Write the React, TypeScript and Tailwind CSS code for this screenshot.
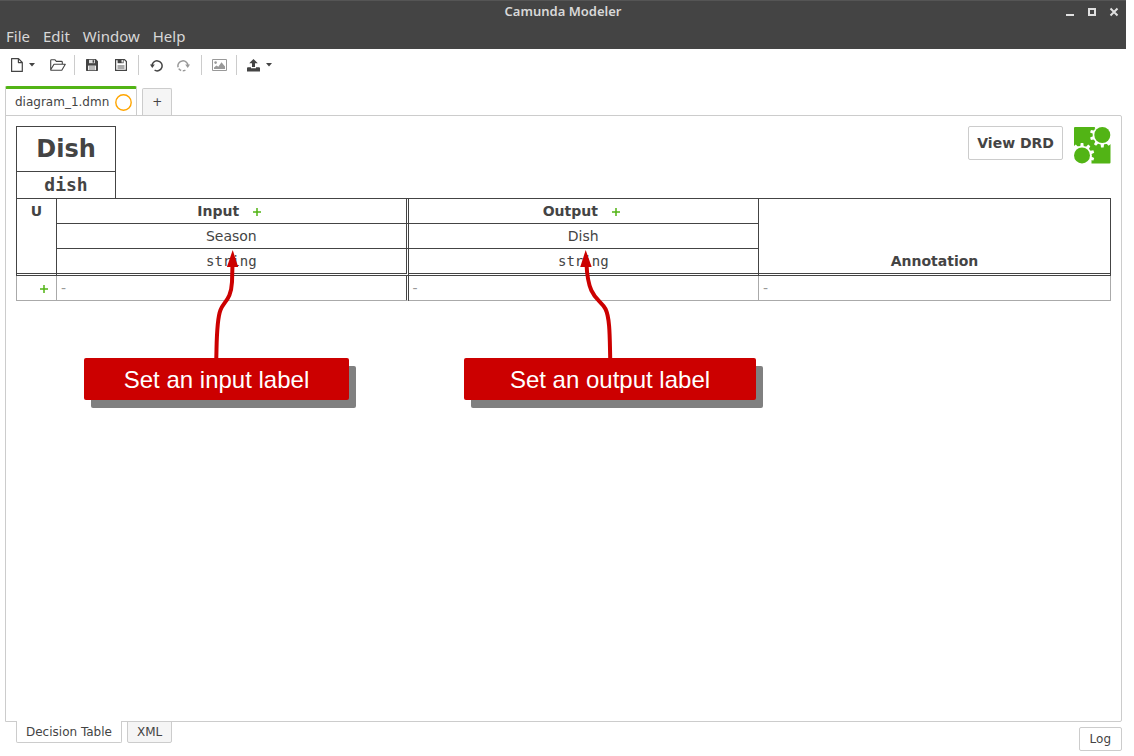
import type { ReactNode } from 'react';

const GREEN = '#52b415';

function ToolButton({ label, className = '', children }: { label: string; className?: string; children: ReactNode }) {
  return (
    <button type="button" aria-label={label} className={`flex h-5 items-center justify-center ${className}`}>
      {children}
    </button>
  );
}

function Separator() {
  return <span className="h-5 w-px bg-[#cccccc]" />;
}

function Caret() {
  return (
    <svg width="6" height="4" viewBox="0 0 6 4" fill="#444" aria-hidden="true">
      <path d="M0 0h6L3 3.4z" />
    </svg>
  );
}

function Disk({ dark }: { dark: boolean }) {
  return (
    <svg width="12" height="12" viewBox="0 0 12 12" aria-hidden="true">
      {dark ? (
        <>
          <path d="M0.7 0H9.8L12 2.2V11.3a.7.7 0 0 1-.7.7H.7a.7.7 0 0 1-.7-.7V.7A.7.7 0 0 1 .7 0z" fill="#444" />
          <path d="M3 .8h6v3.4H3z" fill="#ddd" />
          <path d="M6.6 1.2h1.5v2.5H6.6z" fill="#444" />
          <path d="M2 6.6h8v4.6H2z" fill="#eee" />
          <path d="M3 8h6M3 10h6" stroke="#777" strokeWidth=".9" />
        </>
      ) : (
        <>
          <path d="M.6.6H9.5L11.4 2.5V11.4H.6z" fill="#fff" stroke="#444" strokeWidth="1.2" />
          <path d="M2.6.6h6v3.6h-6z" fill="#444" />
          <path d="M6.6 1.1h1.2v2.3H6.6z" fill="#fff" />
          <path d="M2.5 7h7M2.5 9h7" stroke="#555" strokeWidth="1" />
        </>
      )}
    </svg>
  );
}

function TurnArrow({ color, flip }: { color: string; flip: boolean }) {
  return (
    <svg width="13" height="13" viewBox="0 0 13 13" aria-hidden="true">
      <g transform={flip ? 'matrix(-1 0 0 1 13 0)' : undefined}>
        <path
          d="M2.1 7.3A5 5 0 1 1 4.6 11.2"
          fill="none"
          stroke={color}
          strokeWidth="1.5"
          strokeDasharray={flip ? '17 1.5 3 1.5' : undefined}
        />
        <path d="M0 5.6h4.8L2.3 9z" fill={color} />
      </g>
    </svg>
  );
}

function Logo() {
  const teeth = [18, 54, 90, 126, 162, 198, 234, 270, 306, 342];
  const gears = [
    { x: 28.3, y: 8 },
    { x: 8, y: 28.4 },
  ];
  return (
    <svg width="37" height="38" viewBox="0 -1 37 38" aria-label="Camunda" role="img">
      <rect width="36.5" height="36.5" rx="1" fill={GREEN} />
      <path d="M21.500-1H37V17H28zM-1 19.500H8L17.500 28V37H-1z" fill="#fff" />
      {gears.map((g) => (
        <g key={g.x} transform={`translate(${g.x} ${g.y})`}>
          <circle r="9.7" fill="#fff" />
          {teeth.map((t) => (
            <path key={t} d="M8-1.900L12.400-1.300V1.300L8 1.900z" fill="#fff" transform={`rotate(${t})`} />
          ))}
          <circle r="8" fill={GREEN} />
        </g>
      ))}
    </svg>
  );
}

function AddButton({ label, className = '' }: { label: string; className?: string }) {
  return (
    <button type="button" aria-label={label} className={`align-middle ${className}`}>
      <svg width="8" height="8" viewBox="0 0 8 8" aria-hidden="true">
        <path d="M4 0V8M0 4H8" stroke={GREEN} strokeWidth="1.5" />
      </svg>
    </button>
  );
}

function Callout({ text, className, children }: { text: string; className: string; children: ReactNode }) {
  return (
    <div
      className={`absolute top-[242px] flex h-[42px] items-center justify-center rounded-xs bg-[#cc0000] pt-px font-['Liberation_Sans',sans-serif] text-2xl text-white shadow-[7px_8px_0_0_#808080] ${className}`}
    >
      {text}
      {children}
    </div>
  );
}

const line = 'border-[#444444]';

export default function App() {
  return (
    <div className="flex min-h-screen flex-col bg-white pr-2 font-['DejaVu_Sans',sans-serif] text-xs text-[#444444]">
      <header className="border-t border-[#555555] bg-[#444444] font-['Noto_Sans',sans-serif] text-[#d8d8d8]">
        <div className="grid h-[22px] grid-cols-[1fr_auto_1fr] items-center">
          <h1 className="col-start-2 text-[13px] font-semibold">Camunda Modeler</h1>
          <div className="flex items-center justify-end gap-3 pr-[7px]">
            <button type="button" aria-label="Minimize">
              <svg width="10" height="10" viewBox="0 0 10 10" fill="#e0e0e0"><path d="M1 7h8v2H1z" /></svg>
            </button>
            <button type="button" aria-label="Maximize">
              <svg width="10" height="10" viewBox="0 0 10 10" fill="none" stroke="#e0e0e0" strokeWidth="2"><path d="M2 2h6v6H2z" /></svg>
            </button>
            <button type="button" aria-label="Close">
              <svg width="10" height="10" viewBox="0 0 10 10" fill="none" stroke="#e0e0e0" strokeWidth="2"><path d="M1.5 1.5l7 7M8.5 1.5l-7 7" /></svg>
            </button>
          </div>
        </div>
        <nav className="flex h-[26px] items-center gap-[13px] px-1.5 text-[15px]">
          <button type="button">File</button>
          <button type="button">Edit</button>
          <button type="button">Window</button>
          <button type="button">Help</button>
        </nav>
      </header>

      <div className="flex h-8 items-center pl-2.5" role="toolbar">
        <ToolButton label="New file" className="gap-1.5">
          <svg width="13" height="14" viewBox="0 0 13 14" fill="none" stroke="#444" strokeWidth="1.2" strokeLinejoin="round">
            <path d="M1.6.6H8.500L12.300 4.500V13.400H1.600zM8.400.8V4.600H12.200" />
          </svg>
          <Caret />
        </ToolButton>
        <ToolButton label="Open file" className="ml-[15px]">
          <svg width="16" height="12" viewBox="0 0 16 12" fill="none" stroke="#444" strokeWidth="1.1" strokeLinejoin="round">
            <path d="M.7 10.8V1.5Q.7.7 1.5.7H4.8L6.3 2.4H11.5Q12.3 2.4 12.3 3.2V5.2M.7 10.8L4 5.3H15.3L11.8 11.2H1Q.7 11.2.7 10.8z" />
          </svg>
        </ToolButton>
        <div className="flex items-center gap-[11px] pl-2">
          <Separator />
          <ToolButton label="Save"><Disk dark /></ToolButton>
          <ToolButton label="Save as" className="ml-[6px]"><Disk dark={false} /></ToolButton>
          <Separator />
          <ToolButton label="Undo"><TurnArrow color="#444" flip={false} /></ToolButton>
          <ToolButton label="Redo" className="ml-[3px]"><TurnArrow color="#999" flip /></ToolButton>
          <Separator />
        </div>
        <ToolButton label="Export image" className="pr-[9px] pl-2.5">
          <svg width="15" height="12" viewBox="0 0 15 12" aria-hidden="true">
            <path d="M.5.5h14v11H.5z" fill="#fff" stroke="#999" />
            <circle cx="3.6" cy="3.6" r="1.3" fill="#999" />
            <path d="M2 10V8.5L4.5 6.5 6.3 7.7 9.5 3.3 13 7.5V10z" fill="#999" />
          </svg>
        </ToolButton>
        <Separator />
        <ToolButton label="Deploy" className="ml-2.5 gap-1.5">
          <svg width="13" height="13" viewBox="0 0 13 13" fill="#444" aria-hidden="true">
            <path d="M6.5 0L10.8 4.3H8V8H5V4.3H2.2z" />
            <path d="M.6 8.3H4V9.3H9V8.3H12.4L13 9V12.5H0V9z" />
          </svg>
          <Caret />
        </ToolButton>
      </div>

      <main className="flex grow flex-col px-[5px] pt-[5px] pr-1">
        <div className="flex items-end gap-[5px]">
          <div className="-mb-px flex h-[30px] items-center gap-1.5 rounded-t-xs border-x border-t-[3px] border-x-[#cccccc] border-t-[#52b415] bg-white pr-1 pl-[9px]">
            <a href="#diagram" className="pb-0.5">diagram_1.dmn</a>
            <svg width="17" height="17" viewBox="0 0 17 17" fill="none" stroke="#ffa500" strokeWidth="1.4" aria-label="Unsaved changes" role="img">
              <circle cx="8.5" cy="8.5" r="7.7" />
            </svg>
          </div>
          <button type="button" aria-label="New tab" className="h-[27px] w-[30px] rounded-t-xs border border-b-0 border-[#cccccc] bg-[#f5f5f5]">
            +
          </button>
        </div>

        <section className="relative grow rounded-r-xs border border-[#cccccc] p-2.5">
          <div className="flex items-start justify-between">
            <div className={`border border-b-0 ${line} w-[100px] text-center font-bold`}>
              <h2 className={`border-b ${line} h-[45px] text-2xl leading-[45px]`}>Dish</h2>
              <h3 className="h-[26px] font-['DejaVu_Sans_Mono',monospace] text-lg leading-[25px]">dish</h3>
            </div>
            <div className="flex items-start gap-[11px]">
              <button type="button" className="h-[34px] rounded-xs border border-[#cccccc] px-2 text-sm font-bold">View DRD</button>
              <Logo />
            </div>
          </div>

          <table className="w-full table-fixed border-separate border-spacing-0 text-sm leading-6">
            <colgroup>
              <col className="w-10" />
              <col className="w-[32.2%]" />
              <col className="w-[32%]" />
              <col />
            </colgroup>
            <thead>
              <tr className="h-[25px]">
                <th rowSpan={3} className={`border-t border-l ${line} border-b-3 [border-bottom-style:double] p-0 align-top`}>U</th>
                <th className={`border-t border-l ${line} border-r-3 [border-right-style:double] p-0`}>
                  Input<AddButton label="Add input" className="mr-1 ml-3.5" />
                </th>
                <th className={`border-t border-r ${line} p-0`}>
                  Output<AddButton label="Add output" className="mr-1 ml-3.5" />
                </th>
                <th rowSpan={3} className={`border-t border-r ${line} border-b-3 [border-bottom-style:double] p-0 align-bottom`}>Annotation</th>
              </tr>
              <tr className="h-[25px]">
                <td className={`border-t border-l ${line} border-r-3 [border-right-style:double] p-0 text-center`}>Season</td>
                <td className={`border-t border-r ${line} p-0 text-center`}>Dish</td>
              </tr>
              <tr className="h-7 font-['DejaVu_Sans_Mono',monospace]">
                <td className={`border-t border-l ${line} border-r-3 border-b-3 [border-bottom-style:double] [border-right-style:double] p-0 text-center`}>string</td>
                <td className={`border-t border-r ${line} border-b-3 [border-bottom-style:double] p-0 text-center`}>string</td>
              </tr>
            </thead>
            <tbody>
              <tr className="h-[25px] text-[#999999]">
                <td className="border-b border-l border-[#aaaaaa] p-0 pr-2 text-right">
                  <AddButton label="Add rule" />
                </td>
                <td className="border-r-3 border-b border-l border-[#aaaaaa] border-r-[#444444] [border-right-style:double] p-0 pl-1">-</td>
                <td className="border-r border-b border-[#aaaaaa] p-0 pl-1">-</td>
                <td className="border-r border-b border-[#aaaaaa] p-0 pl-1">-</td>
              </tr>
            </tbody>
          </table>

          <Callout text="Set an input label" className="left-[78px] w-[265px]">
            <svg className="absolute bottom-full left-[120px]" width="40" height="108" viewBox="0 0 40 108" aria-hidden="true">
              <path d="M12.300 108C12.800 90 12.500 70 16.500 60C20 51 27 50 28 32L28.500 14" fill="none" stroke="#cc0000" strokeWidth="4" />
              <path d="M28.700 0L34.200 17H22.900z" fill="#cc0000" />
            </svg>
          </Callout>
          <Callout text="Set an output label" className="left-[458px] w-[292px]">
            <svg className="absolute bottom-full left-[110px]" width="50" height="108" viewBox="0 0 50 108" aria-hidden="true">
              <path d="M36.200 108C35.700 88 36 68 31.500 59C26 48 14 50 12.500 14" fill="none" stroke="#cc0000" strokeWidth="4" />
              <path d="M11.700 0L17.700 17H6.200z" fill="#cc0000" />
            </svg>
          </Callout>
        </section>

        <footer className="flex h-[34px] items-start justify-between pl-[11px]">
          <div className="-mt-px flex items-start gap-[5px]">
            <button type="button" className="relative h-[22px] rounded-b-xs border border-t-0 border-[#cccccc] bg-white px-[9px]">Decision Table</button>
            <button type="button" className="h-[22px] rounded-b-xs border border-[#cccccc] bg-[#f5f5f5] px-[9px]">XML</button>
          </div>
          <button type="button" className="mt-[5px] h-6 rounded-xs border border-[#cccccc] px-2.5">Log</button>
        </footer>
      </main>
    </div>
  );
}
